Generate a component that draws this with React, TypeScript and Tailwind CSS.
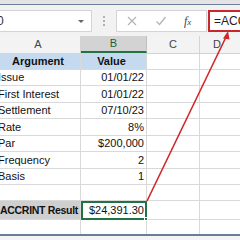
import type { ReactNode } from "react";

type Row = { label: string; value: string; h: number };

const rows: Row[] = [
  { label: "Issue", value: "01/01/22", h: 16 },
  { label: "First Interest", value: "01/01/22", h: 17 },
  { label: "Settlement", value: "07/10/23", h: 16 },
  { label: "Rate", value: "8%", h: 17 },
  { label: "Par", value: "$200,000", h: 16 },
  { label: "Frequency", value: "2", h: 17 },
  { label: "Basis", value: "1", h: 16 },
  { label: "", value: "", h: 16 },
];

function Cell({ w, className = "", children }: { w: string; className?: string; children?: ReactNode }) {
  return <div className={`${w} shrink-0 h-full border-r border-b border-[#d9d9d9] flex items-end pb-[1px] leading-[13px] ${className}`}>{children}</div>;
}

export default function App() {
  return (
    <div className="relative w-[240px] h-[240px] overflow-hidden bg-[#f2f2f2] text-[#111]" style={{ fontFamily: '"Liberation Sans", Arial, sans-serif' }}>
      <div className="h-[4px] bg-[#e4e4e4]" />
      <div className="h-[1px] bg-[#6f7fa0]" />
      <div className="h-[5px]" />
      {/* formula bar */}
      <div className="flex h-[22px] items-stretch">
        <div className="w-[92px] shrink-0 bg-white border-y border-r border-[#d4d4d4] flex items-center justify-between pr-[7px]">
          <span className="text-[12px] text-[#333] -ml-[3px]">0</span>
          <span className="w-0 h-0 border-l-[3px] border-r-[3px] border-t-[3px] border-l-transparent border-r-transparent border-t-[#666]" />
        </div>
        <div className="w-[24px] shrink-0 flex flex-col items-center justify-center gap-[2px]">
          <span className="w-[2px] h-[2px] bg-[#b0b0b0]" />
          <span className="w-[2px] h-[2px] bg-[#b0b0b0]" />
          <span className="w-[2px] h-[2px] bg-[#b0b0b0]" />
        </div>
        <div className="w-[91px] shrink-0 bg-white border border-[#d4d4d4] flex items-center">
          <svg width="12" height="12" viewBox="0 0 12 12" className="ml-[9px]">
            <path d="M2 2 L10 10 M10 2 L2 10" stroke="#b4b4b4" strokeWidth="1.2" fill="none" />
          </svg>
          <svg width="12" height="12" viewBox="0 0 12 12" className="ml-[17px]">
            <path d="M1.5 6.5 L4.5 9.5 L10.5 2" stroke="#b4b4b4" strokeWidth="1.3" fill="none" />
          </svg>
          <span className="ml-[17px] text-[12px] italic text-[#444]" style={{ fontFamily: '"Liberation Serif", serif' }}>
            f<span className="text-[9px]">x</span>
          </span>
        </div>
        <div className="w-[1px] shrink-0" />
        <div className="flex-1 min-w-[40px] bg-white border-2 border-[#c8282c] -mr-[6px] flex items-center pl-[4px]">
          <span className="text-[12px] text-[#222]">=ACCRINT</span>
        </div>
      </div>
      <div className="h-[4px]" />
      {/* column headers */}
      <div className="flex h-[17px] text-[11px] text-[#444] bg-[#f3f3f3]">
        <div className="w-[81px] shrink-0 border-r border-[#d4d4d4] flex items-center justify-center pr-[4px]">A</div>
        <div className="w-[66px] shrink-0 bg-[#d3d3d3] border-b-2 border-[#217346] border-r border-r-[#c0c0c0] flex items-center justify-center text-[#1d5e3a]">B</div>
        <div className="w-[53px] shrink-0 border-r border-[#d4d4d4] flex items-center justify-center">C</div>
        <div className="flex-1 flex items-center justify-center pr-[6px]">D</div>
      </div>
      {/* grid */}
      <div className="bg-white text-[11px]">
        <div className="flex h-[17px] border-t border-[#d4d4d4]">
          <Cell w="w-[81px]" className="bg-[#c5d9ef] justify-center font-bold pr-[4px]">Argument</Cell>
          <Cell w="w-[66px]" className="bg-[#c5d9ef] font-bold justify-center pr-[4px]">Value</Cell>
          <Cell w="w-[53px]" />
          <div className="flex-1 border-b border-[#d9d9d9]" />
        </div>
        {rows.map((r, i) => (
          <div key={i} className="flex" style={{ height: r.h }}>
            <Cell w="w-[81px]" className="-indent-[2px]">{r.label}</Cell>
            <Cell w="w-[66px]" className="justify-end pr-[2px]">{r.value}</Cell>
            <Cell w="w-[53px]" />
            <div className="flex-1 border-b border-[#d9d9d9]" />
          </div>
        ))}
        <div className="flex h-[19px]">
          <Cell w="w-[81px]" className="bg-[#cfcfcf] font-bold whitespace-nowrap text-[10.5px] tracking-[-0.3px] pb-[2px]">ACCRINT Result</Cell>
          <div className="relative w-[66px] shrink-0 h-full border-2 border-[#217346] flex items-end pb-[1px] leading-[13px] justify-end pr-[1px]">
            $24,391.30
            <span className="absolute -right-[3px] -bottom-[3px] w-[4px] h-[4px] bg-[#217346] border border-white" />
          </div>
          <Cell w="w-[53px]" />
          <div className="flex-1 border-b border-[#d9d9d9]" />
        </div>
        <div className="flex h-[14px]">
          <Cell w="w-[81px]" className="border-b-0" />
          <Cell w="w-[66px]" className="border-b-0" />
          <Cell w="w-[53px]" className="border-b-0" />
          <div className="flex-1" />
        </div>
      </div>
      <div className="h-[2px] bg-[#6d7c98]" />
      <div className="h-[10px] bg-[#f4f4f4]" />
      {/* red arrow */}
      <svg className="absolute left-0 top-0 pointer-events-none" width="240" height="240" viewBox="0 0 240 240">
        <line x1="226.5" y1="36" x2="147" y2="201" stroke="#d2262b" strokeWidth="1.6" />
        <path d="M228 31 L223 38.5 L229.5 39.5 Z" fill="#d2262b" />
      </svg>
    </div>
  );
}
